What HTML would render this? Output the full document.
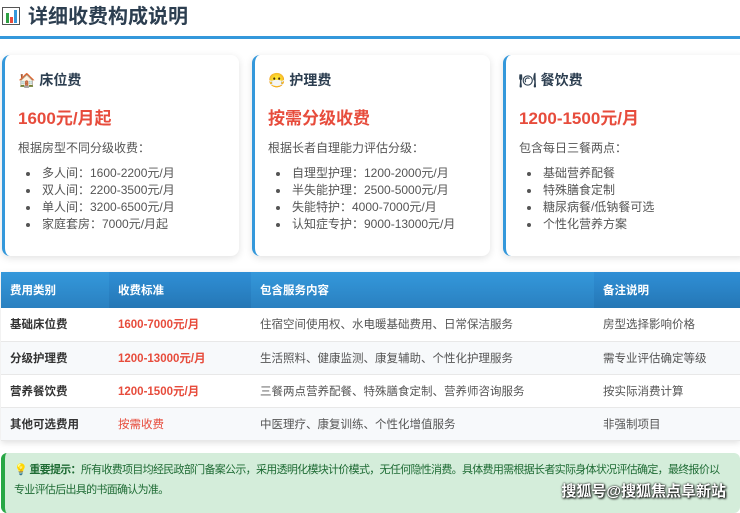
<!DOCTYPE html>
<html><head><meta charset="utf-8"><style>
*{margin:0;padding:0;box-sizing:border-box}
body{width:740px;height:506px;overflow:hidden;background:#fff;font-family:"Liberation Sans","Noto Sans CJK SC",sans-serif;color:#333;position:relative}
h1{position:absolute;left:2px;top:4px;font-size:20px;font-weight:bold;color:#2c3e50;line-height:26px}
.line{position:absolute;left:0;top:36px;width:740px;height:3px;background:#3498db}
.card{position:absolute;top:55px;height:201px;background:#fff;border-left:3px solid #3498db;border-radius:8px;box-shadow:0 2px 8px rgba(0,0,0,.12)}
.card h3{position:absolute;top:15px;left:13px;font-size:14px;font-weight:bold;color:#2c3e50}
.card .p{position:absolute;top:49px;left:13px;font-size:17px;font-weight:bold;color:#e74c3c}
.card .d{position:absolute;top:84px;left:13px;font-size:12px;color:#555}
.card ul{position:absolute;top:110px;left:35px;font-size:12px;color:#555;line-height:17px;list-style:disc}
.card li{padding-left:2px}
table{position:absolute;left:1px;top:272px;width:739px;border-collapse:collapse;font-size:11.5px;box-shadow:0 2px 6px rgba(0,0,0,.12)}
th{height:36px;color:#fff;text-align:left;padding-left:9px;font-weight:bold;background:linear-gradient(#3498db,#2a80c0)}
th.a{background:linear-gradient(#2f8fd6,#2577b5)}
td{height:33px;padding-left:9px;color:#555;border-bottom:1px solid #e8e8e8}
tr:nth-child(odd) td{background:#f7f9fb}
td.b{font-weight:bold;color:#333}
td.r{font-weight:bold;color:#e74c3c}
.note{position:absolute;left:1px;top:453px;width:739px;height:60px;background:#d4edda;border-left:4px solid #28a745;border-radius:6px;padding:7px 0 0 9px;font-size:11px;letter-spacing:-0.7px;line-height:20px;color:#1e6b34;white-space:nowrap;overflow:hidden}
.wm{position:absolute;right:14px;top:480px;font-size:15px;font-weight:bold;color:#fff;text-shadow:0 0 2px #000,1px 1px 2px #000}
</style></head><body>
<h1><span style="display:inline-block;width:18px;height:18px;border:1px solid #555;background:#fff;vertical-align:-2px;position:relative;margin-right:8px"><i style="position:absolute;left:3px;bottom:1px;width:3px;height:10px;background:#2ea043"></i><i style="position:absolute;left:7px;bottom:1px;width:3px;height:6px;background:#e74c3c"></i><i style="position:absolute;left:11px;bottom:1px;width:3px;height:13px;background:#3498db"></i></span>详细收费构成说明</h1>
<div class="line"></div>
<div class="card" style="left:2px;width:237px"><h3>🏠 床位费</h3><div class="p">1600元/月起</div><div class="d">根据房型不同分级收费：</div><ul><li>多人间：1600-2200元/月</li><li>双人间：2200-3500元/月</li><li>单人间：3200-6500元/月</li><li>家庭套房：7000元/月起</li></ul></div>
<div class="card" style="left:252px;width:238px"><h3>😷 护理费</h3><div class="p">按需分级收费</div><div class="d">根据长者自理能力评估分级：</div><ul><li>自理型护理：1200-2000元/月</li><li>半失能护理：2500-5000元/月</li><li>失能特护：4000-7000元/月</li><li>认知症专护：9000-13000元/月</li></ul></div>
<div class="card" style="left:503px;width:245px"><h3>🍽 餐饮费</h3><div class="p">1200-1500元/月</div><div class="d">包含每日三餐两点：</div><ul><li>基础营养配餐</li><li>特殊膳食定制</li><li>糖尿病餐/低钠餐可选</li><li>个性化营养方案</li></ul></div>
<table><tr><th style="width:108px">费用类别</th><th class="a" style="width:142px">收费标准</th><th style="width:343px">包含服务内容</th><th class="a">备注说明</th></tr>
<tr><td class="b">基础床位费</td><td class="r">1600-7000元/月</td><td>住宿空间使用权、水电暖基础费用、日常保洁服务</td><td>房型选择影响价格</td></tr>
<tr><td class="b">分级护理费</td><td class="r">1200-13000元/月</td><td>生活照料、健康监测、康复辅助、个性化护理服务</td><td>需专业评估确定等级</td></tr>
<tr><td class="b">营养餐饮费</td><td class="r">1200-1500元/月</td><td>三餐两点营养配餐、特殊膳食定制、营养师咨询服务</td><td>按实际消费计算</td></tr>
<tr><td class="b">其他可选费用</td><td class="r" style="font-weight:normal">按需收费</td><td>中医理疗、康复训练、个性化增值服务</td><td>非强制项目</td></tr></table>
<div class="note">💡 <b>重要提示：</b>所有收费项目均经民政部门备案公示，采用透明化模块计价模式，无任何隐性消费。具体费用需根据长者实际身体状况评估确定，最终报价以<br>专业评估后出具的书面确认为准。</div>
<div class="wm">搜狐号@搜狐焦点阜新站</div>
</body></html>
